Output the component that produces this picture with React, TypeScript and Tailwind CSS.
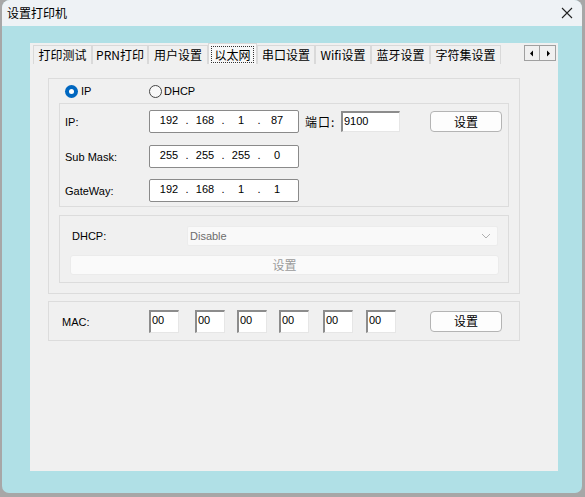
import React from 'react';

const cjk = { fontFamily: '"Noto Sans CJK SC", "Microsoft YaHei", sans-serif' };
const latin = { fontFamily: '"Liberation Sans", Arial, sans-serif' };

const tabs = [
  { label: '打印测试', w: 'w-[59px]' },
  { label: 'PRN打印', w: 'w-[56px]' },
  { label: '用户设置', w: 'w-[60px]' },
  { label: '以太网', w: 'w-[49px]' },
  { label: '串口设置', w: 'w-[58px]' },
  { label: 'Wifi设置', w: 'w-[56px]' },
  { label: '蓝牙设置', w: 'w-[59px]' },
  { label: '字符集设置', w: 'w-[71px]' },
];

function IpBox({ parts }: { parts: string[] }) {
  return (
    <div className="w-[150px] h-[23px] border border-[#8a8a8a] rounded-[2px] bg-white flex items-center pl-[5px] pb-[2px] text-[11px] text-black" style={latin}>
      {parts.map((p, i) => (
        <React.Fragment key={i}>
          {i > 0 && <span className="w-[8px] text-center">.</span>}
          <span className="w-[28px] text-center">{p}</span>
        </React.Fragment>
      ))}
    </div>
  );
}

function SunkenInput({ value, w, h }: { value: string; w: string; h: string }) {
  return (
    <div
      className={`${w} ${h} bg-white border-t-2 border-l-2 border-t-[#8c8c8c] border-l-[#8c8c8c] border-r border-b border-r-[#e6e6e6] border-b-[#e6e6e6] text-[11px] leading-[16px] pl-[1px] text-black`}
      style={latin}
    >
      {value}
    </div>
  );
}

function SetButton({ h }: { h: string }) {
  return (
    <button className={`w-[72px] ${h} bg-[#fdfdfd] border border-[#b4b4b4] rounded-[4px] text-[12px] text-black flex items-center justify-center`} style={cjk}>
      设置
    </button>
  );
}

export default function App() {
  return (
    <div className="w-[585px] h-[497px] bg-[#a7a7a7] overflow-hidden">
      <div className="ml-[2px] w-[580px] h-[493px] bg-[#b0e0e6] rounded-t-[8px] rounded-b-[7px] flex flex-col overflow-hidden">
        {/* title bar */}
        <div className="h-[26px] bg-[#eef2f5] flex items-center justify-between pl-[5px] pr-[8px]">
          <span className="text-[12px] text-black" style={cjk}>设置打印机</span>
          <svg width="12" height="12" viewBox="0 0 12 12" className="mr-[1px]">
            <path d="M1 1L11 11M11 1L1 11" stroke="#222" strokeWidth="1.1" />
          </svg>
        </div>

        <div className="flex-1 pt-[17px] pl-[28px] pb-[22px]">
          <div className="w-[528px] h-full bg-[#f0f0f0] flex flex-col">
            {/* tab strip */}
            <div className="h-[21px] flex items-end pl-[3px]">
              {tabs.map((t) => {
                const sel = t.label === '以太网';
                return (
                  <div
                    key={t.label}
                    className={`${t.w} flex items-center justify-center text-[12px] text-black border-t border-l border-r border-[#d9d9d9] ${sel ? 'h-[21px] bg-[#f8f8f8]' : 'h-[19px] bg-[#f0f0f0]'}`}
                    style={cjk}
                  >
                    {sel ? (
                      <span className="border border-dotted border-[#333] px-[2px] leading-[15px]">{t.label}</span>
                    ) : (
                      t.label
                    )}
                  </div>
                );
              })}
              <div className="flex-1" />
              <div className="flex mb-[3px] mr-[2px]">
                <div className="w-[16px] h-[16px] border border-[#a0a0a0] bg-[#f0f0f0] flex items-center justify-center">
                  <svg width="6" height="7" viewBox="0 0 6 7"><path d="M4 0.5L1 3.5L4 6.5Z" fill="#000" /></svg>
                </div>
                <div className="w-[16px] h-[16px] border border-l-0 border-[#a0a0a0] bg-[#f0f0f0] flex items-center justify-center">
                  <svg width="6" height="7" viewBox="0 0 6 7"><path d="M2 0.5L5 3.5L2 6.5Z" fill="#000" /></svg>
                </div>
              </div>
            </div>

            {/* page */}
            <div className="flex-1 pt-[14px] pl-[18px] text-[11px] text-black" style={latin}>
              {/* group 1 */}
              <div className="w-[472px] h-[216px] border border-[#dcdcdc] pl-[10px]">
                <div className="h-[24px] flex items-center pl-[6px]">
                  <div className="flex items-center w-[84px]">
                    <span className="w-[13px] h-[13px] rounded-full bg-[#0067c0] flex items-center justify-center">
                      <span className="w-[5px] h-[5px] rounded-full bg-white" />
                    </span>
                    <span className="ml-[3px]">IP</span>
                  </div>
                  <div className="flex items-center">
                    <span className="w-[13px] h-[13px] rounded-full border border-[#444] bg-[#f8f8f8]" />
                    <span className="ml-[2px]">DHCP</span>
                  </div>
                </div>

                {/* static ip box */}
                <div className="w-[450px] h-[104px] border border-[#dcdcdc] pt-[6px] pl-[5px] flex flex-col">
                  <div className="flex items-center h-[23px]">
                    <span className="w-[84px] pt-[2px]">IP:</span>
                    <IpBox parts={['192', '168', '1', '87']} />
                    <span className="ml-[6px] w-[36px] text-[12px] tracking-[1px]" style={cjk}>端口:</span>
                    <SunkenInput value="9100" w="w-[59px]" h="h-[21px]" />
                    <div className="ml-[30px]">
                      <SetButton h="h-[21px]" />
                    </div>
                  </div>
                  <div className="flex items-center h-[23px] mt-[12px]">
                    <span className="w-[84px] pt-[2px]">Sub Mask:</span>
                    <IpBox parts={['255', '255', '255', '0']} />
                  </div>
                  <div className="flex items-center h-[23px] mt-[11px]">
                    <span className="w-[84px] pt-[2px]">GateWay:</span>
                    <IpBox parts={['192', '168', '1', '1']} />
                  </div>
                </div>

                {/* dhcp box */}
                <div className="w-[450px] h-[68px] border border-[#dcdcdc] mt-[8px] pt-[10px] pl-[10px]">
                  <div className="flex items-center h-[20px]">
                    <span className="w-[117px] pl-[2px]">DHCP:</span>
                    <div className="w-[311px] h-[20px] bg-[#f9f9f9] border border-[#ececec] rounded-[2px] flex items-center justify-between pl-[2px] pr-[6px] text-[#6d6d6d]">
                      <span>Disable</span>
                      <svg width="10" height="6" viewBox="0 0 10 6"><path d="M1 1L5 5L9 1" stroke="#b0b0b0" fill="none" /></svg>
                    </div>
                  </div>
                  <div className="mt-[9px] w-[429px] h-[20px] bg-[#fafafa] border border-[#ebebeb] rounded-[3px] flex items-center justify-center text-[12px] text-[#9a9a9a]" style={cjk}>
                    设置
                  </div>
                </div>
              </div>

              {/* mac box */}
              <div className="w-[472px] h-[40px] border border-[#dcdcdc] mt-[7px] flex items-center pl-[13px]">
                <span className="w-[87px] pt-[2px]">MAC:</span>
                <SunkenInput value="00" w="w-[30px]" h="h-[23px]" />
                <div className="ml-[16px]"><SunkenInput value="00" w="w-[30px]" h="h-[23px]" /></div>
                <div className="ml-[12px]"><SunkenInput value="00" w="w-[30px]" h="h-[23px]" /></div>
                <div className="ml-[12px]"><SunkenInput value="00" w="w-[30px]" h="h-[23px]" /></div>
                <div className="ml-[14px]"><SunkenInput value="00" w="w-[30px]" h="h-[23px]" /></div>
                <div className="ml-[13px]"><SunkenInput value="00" w="w-[30px]" h="h-[23px]" /></div>
                <div className="ml-[34px]">
                  <SetButton h="h-[21px]" />
                </div>
              </div>
            </div>
          </div>
        </div>
      </div>
    </div>
  );
}
